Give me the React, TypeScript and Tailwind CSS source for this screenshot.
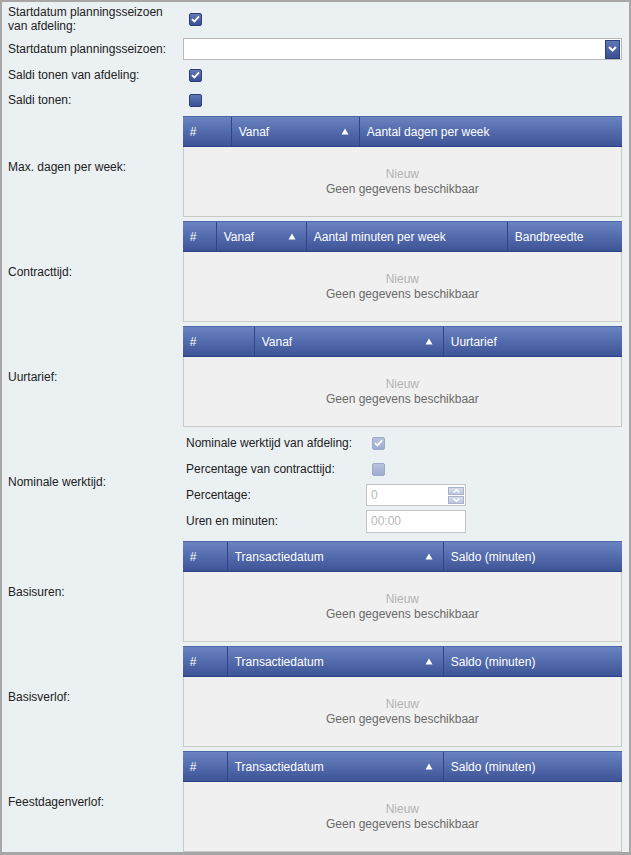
import React from 'react'

type Col = { label: string; width?: number; sort?: boolean }

function CheckBox({ checked, disabled }: { checked?: boolean; disabled?: boolean }) {
  const box = disabled
    ? 'border-[#9ea9c9] bg-gradient-to-b from-[#b9c3de] to-[#9eabd0]'
    : 'border-[#2c3f7d] bg-gradient-to-b from-[#6077b7] to-[#3a4f95]'
  return (
    <span className={`inline-flex items-center justify-center w-[13px] h-[13px] rounded-[2px] border ${box}`}>
      {checked && (
        <svg width="9" height="8" viewBox="0 0 9 8">
          <path d="M1 4.2 L3.4 6.5 L8 1.4" fill="none" stroke="white" strokeWidth="1.8" />
        </svg>
      )}
    </span>
  )
}

function SortArrow() {
  return (
    <svg width="8" height="7" viewBox="0 0 8 7" className="shrink-0">
      <path d="M4 0.5 L7.5 6.5 L0.5 6.5 Z" fill="white" />
    </svg>
  )
}

function Grid({ cols }: { cols: Col[] }) {
  return (
    <div className="w-[440px] h-[101px] flex flex-col">
      <div className="h-[31px] flex bg-gradient-to-b from-[#6a83c1] to-[#3d5497] border-t border-t-[#4e66a8] border-b border-b-[#2b4086] text-white">
        {cols.map((c, i) => (
          <div
            key={i}
            className={`flex items-center justify-between pl-[7px] pr-[10px] ${i < cols.length - 1 ? 'border-r border-[#2f4589]' : 'flex-1'}`}
            style={c.width ? { width: c.width } : undefined}
          >
            <span className="whitespace-nowrap">{c.label}</span>
            {c.sort && <SortArrow />}
          </div>
        ))}
      </div>
      <div className="flex-1 bg-[#f0f0f0] border-x border-b border-[#c9c9c9] flex flex-col items-center justify-center leading-[15px]">
        <span className="text-[#b3b3b3]">Nieuw</span>
        <span className="text-[#6a6a6a]">Geen gegevens beschikbaar</span>
      </div>
    </div>
  )
}

function GridRow({ label, cols, className }: { label: string; cols: Col[]; className?: string }) {
  return (
    <div className={`flex items-center ${className ?? ''}`}>
      <div className="w-[175px]">{label}</div>
      <Grid cols={cols} />
    </div>
  )
}

const trans: Col[] = [
  { label: '#', width: 45 },
  { label: 'Transactiedatum', width: 216, sort: true },
  { label: 'Saldo (minuten)' },
]

export default function App() {
  return (
    <div className="w-[631px] h-[855px] bg-[#ebf0f3] border-x-2 border-t-2 border-b-[3px] border-[#a6a6a6] pl-[6px] pr-[7px] text-[12px] text-[#222] font-['Liberation_Sans',Arial,sans-serif] flex flex-col">
      {/* basic settings */}
      <div className="h-[34px] flex items-center">
        <div className="w-[175px] leading-[14px]">
          Startdatum planningsseizoen
          <br />
          van afdeling:
        </div>
        <span className="ml-[6px] flex"><CheckBox checked /></span>
      </div>
      <div className="h-[26px] flex items-center">
        <div className="w-[175px]">Startdatum planningsseizoen:</div>
        <div className="w-[440px] h-[22px] bg-white border border-[#b9b9b9] flex justify-end items-center pr-[1px]">
          <div className="w-[15px] h-[19px] border border-[#2c3f7d] bg-gradient-to-b from-[#5f76b6] to-[#3a4f95] flex items-center justify-center">
            <svg width="9" height="6" viewBox="0 0 9 6">
              <path d="M1 1 L4.5 4.5 L8 1" fill="none" stroke="white" strokeWidth="2" />
            </svg>
          </div>
        </div>
      </div>
      <div className="h-[26px] flex items-center">
        <div className="w-[175px]">Saldi tonen van afdeling:</div>
        <span className="ml-[6px] flex"><CheckBox checked /></span>
      </div>
      <div className="h-[24px] flex items-center">
        <div className="w-[175px]">Saldi tonen:</div>
        <span className="ml-[6px] flex"><CheckBox /></span>
      </div>

      {/* tables */}
      <GridRow
        className="mt-[4px]"
        label="Max. dagen per week:"
        cols={[
          { label: '#', width: 49 },
          { label: 'Vanaf', width: 128, sort: true },
          { label: 'Aantal dagen per week' },
        ]}
      />
      <GridRow
        className="mt-[4px]"
        label="Contracttijd:"
        cols={[
          { label: '#', width: 34 },
          { label: 'Vanaf', width: 90, sort: true },
          { label: 'Aantal minuten per week', width: 201 },
          { label: 'Bandbreedte' },
        ]}
      />
      <GridRow
        className="mt-[4px]"
        label="Uurtarief:"
        cols={[
          { label: '#', width: 72 },
          { label: 'Vanaf', width: 189, sort: true },
          { label: 'Uurtarief' },
        ]}
      />

      {/* nominale werktijd */}
      <div className="mt-[3px] flex items-center">
        <div className="w-[175px]">Nominale werktijd:</div>
        <div className="flex flex-col pl-[3px]">
          <div className="h-[26px] flex items-center">
            <div className="w-[180px]">Nominale werktijd van afdeling:</div>
            <span className="ml-[6px] flex"><CheckBox checked disabled /></span>
          </div>
          <div className="h-[26px] flex items-center">
            <div className="w-[180px]">Percentage van contracttijd:</div>
            <span className="ml-[6px] flex"><CheckBox disabled /></span>
          </div>
          <div className="h-[26px] flex items-center">
            <div className="w-[180px]">Percentage:</div>
            <div className="w-[100px] h-[22px] bg-white border border-[#c4c4c4] flex items-center justify-between pl-[4px] pr-[1px] text-[#b8b8b8]">
              <span>0</span>
              <div className="flex flex-col gap-[1px]">
                <div className="w-[16px] h-[8px] border border-[#aab3cb] bg-gradient-to-b from-[#d6dcea] to-[#bcc5dc] flex items-center justify-center">
                  <svg width="7" height="4" viewBox="0 0 7 4">
                    <path d="M0.5 3.5 L3.5 0.8 L6.5 3.5" fill="none" stroke="white" strokeWidth="1.4" />
                  </svg>
                </div>
                <div className="w-[16px] h-[8px] border border-[#aab3cb] bg-gradient-to-b from-[#d6dcea] to-[#bcc5dc] flex items-center justify-center">
                  <svg width="7" height="4" viewBox="0 0 7 4">
                    <path d="M0.5 0.5 L3.5 3.2 L6.5 0.5" fill="none" stroke="white" strokeWidth="1.4" />
                  </svg>
                </div>
              </div>
            </div>
          </div>
          <div className="h-[26px] flex items-center">
            <div className="w-[180px]">Uren en minuten:</div>
            <div className="w-[100px] h-[23px] bg-white border border-[#c4c4c4] flex items-center pl-[4px] text-[#b8b8b8]">
              00:00
            </div>
          </div>
        </div>
      </div>

      <GridRow className="mt-[7px]" label="Basisuren:" cols={trans} />
      <GridRow className="mt-[4px]" label="Basisverlof:" cols={trans} />
      <GridRow className="mt-[4px]" label="Feestdagenverlof:" cols={trans} />
    </div>
  )
}
